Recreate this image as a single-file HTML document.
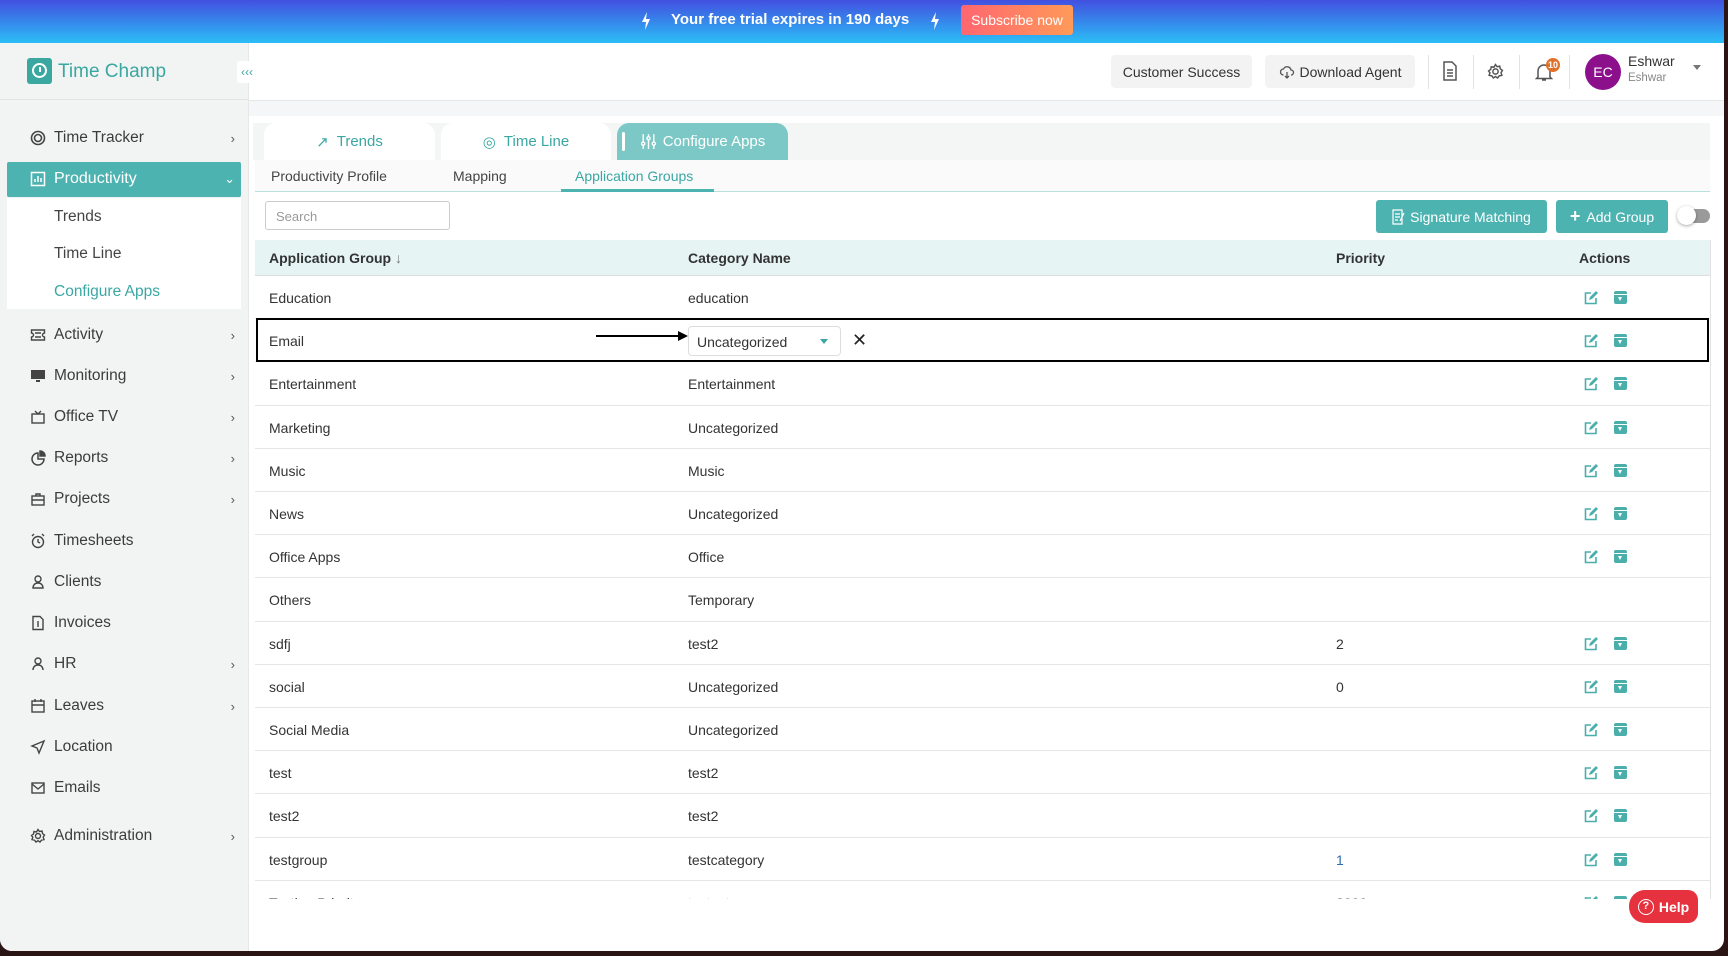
<!DOCTYPE html>
<html><head><meta charset="utf-8"><style>
*{box-sizing:border-box;margin:0;padding:0}
body{width:1728px;height:956px;overflow:hidden;background:#2a1414;font-family:"Liberation Sans",sans-serif;color:#333;position:relative}
.a{position:absolute}
#page{position:absolute;left:0;top:0;width:1724px;height:951px;background:#fff;border-radius:0 0 12px 12px;overflow:hidden}
#banner{left:0;top:0;width:1724px;height:43px;background:linear-gradient(#4250e0,#2bbef6)}
#side{left:0;top:43px;width:249px;height:908px;background:#f2f4f4;border-right:1px solid #e6e8e8}
.nav{position:absolute;left:30px;font-size:15.5px;color:#3c3c3c;display:flex;align-items:center;width:205px}
.nav svg{width:16px;height:16px;margin-right:8px;flex:none}
.nav .ch{position:absolute;right:0;font-size:13px;color:#555}
.sub{position:absolute;left:54px;font-size:15.5px;color:#444}
.hdrbtn{background:#f3f3f3;border-radius:4px;height:33px;top:55px;font-size:14px;color:#333;display:flex;align-items:center;justify-content:center}
.sep{top:55px;width:1px;height:34px;background:#e3e3e3}
.tab{top:123px;height:37px;border-radius:12px 12px 0 0;background:#fff;display:flex;align-items:center;justify-content:center;font-size:15px;color:#3aa7a3}
.st{top:160px;height:32px;line-height:32px;font-size:14px;color:#444}
.row{position:absolute;left:0;width:1455px;height:43.2px;border-bottom:1px solid #e6e6e6;font-size:14px}
.row span{position:absolute;top:14px}
.c1{left:14px}.c2{left:433px}.c3{left:1081px}
.ed{position:absolute;left:1329px;top:15px;width:14px;height:14px}
.ar{position:absolute;left:1359px;top:15px;width:13px;height:13px;background:#4aafab;border-radius:2px}
.ar:before{content:"";position:absolute;left:0;top:3px;width:13px;height:1px;background:#fff}
.ar:after{content:"";position:absolute;left:4px;top:6px;border-left:2.5px solid transparent;border-right:2.5px solid transparent;border-top:4px solid #fff}
</style></head><body>
<div id="page">
<div id="banner" class="a">
 <svg class="a" style="left:641px;top:12px" width="10" height="18" viewBox="0 0 10 18"><path d="M6 0L1 10h4l-1 8 5-11H5z" fill="#fff"/></svg>
 <div class="a" style="left:671px;top:11px;color:#fff;font-weight:bold;font-size:15px">Your free trial expires in 190 days</div>
 <svg class="a" style="left:930px;top:12px" width="10" height="18" viewBox="0 0 10 18"><path d="M6 0L1 10h4l-1 8 5-11H5z" fill="#fff"/></svg>
 <div class="a" style="left:961px;top:5px;width:112px;height:30px;border-radius:3px;background:linear-gradient(90deg,#ff6670,#ff9a58);color:#fff;font-size:14px;line-height:30px;text-align:center">Subscribe now</div>
</div>
<div id="side" class="a">
 <div class="a" style="left:27px;top:15px;width:25px;height:26px;background:#3aa7a0;border-radius:3px"><div class="a" style="left:5px;top:5px;width:15px;height:15px;border:2px solid #fff;border-radius:50%"></div><div class="a" style="left:12px;top:9px;width:2px;height:5px;background:#fff"></div></div>
 <div class="a" style="left:58px;top:18px;font-size:19px;color:#3aa7a0">Time Champ</div>
 <div class="a" style="left:237px;top:18px;width:20px;height:22px;background:#fff;border-radius:3px;color:#3aa7a0;font-size:12px;text-align:center;line-height:22px">‹‹‹</div>
 <div class="a" style="left:0;top:56px;width:249px;height:1px;background:#e3e3e3"></div>
 <div class="nav" style="top:86px"><svg viewBox="0 0 16 16" fill="none" stroke="#444" stroke-width="1.6"><circle cx="8" cy="8" r="6.5"/><circle cx="8" cy="8" r="3.5"/></svg>Time Tracker<span class="ch">›</span></div>
 <div class="a" style="left:7px;top:119px;width:234px;height:35px;background:#4db3b0;border-radius:2px"></div>
 <div class="nav" style="top:127px;color:#fff;font-size:16px"><svg viewBox="0 0 16 16" fill="none" stroke="#fff" stroke-width="1.5"><rect x="1.5" y="1.5" width="13" height="13"/><path d="M5 11V8M8 11V5M11 11V7"/></svg>Productivity<span class="ch" style="color:#fff">⌄</span></div>
 <div class="a" style="left:7px;top:155px;width:234px;height:111px;background:#fff"></div>
 <div class="sub" style="top:165px">Trends</div>
 <div class="sub" style="top:202px">Time Line</div>
 <div class="sub" style="top:240px;color:#3aa7a3">Configure Apps</div>
 <div class="nav" style="top:283px"><svg viewBox="0 0 16 16" fill="none" stroke="#444" stroke-width="1.4"><path d="M1.5 3h13v3a2 2 0 0 0 0 4v3h-13v-3a2 2 0 0 0 0-4z M5 6h6M5 10h6"/></svg>Activity<span class="ch">›</span></div>
 <div class="nav" style="top:324px"><svg viewBox="0 0 16 16" fill="#444"><rect x="1" y="2" width="14" height="9"/><rect x="6" y="12" width="4" height="2"/></svg>Monitoring<span class="ch">›</span></div>
 <div class="nav" style="top:365px"><svg viewBox="0 0 16 16" fill="none" stroke="#444" stroke-width="1.4"><rect x="2" y="5" width="12" height="9"/><path d="M5 2l3 3 3-3"/></svg>Office TV<span class="ch">›</span></div>
 <div class="nav" style="top:406px"><svg viewBox="0 0 16 16" fill="none" stroke="#444" stroke-width="1.5"><path d="M8 3a6 6 0 1 0 6 6H8z"/><path d="M10 1v5h5a5 5 0 0 0-5-5z" fill="#444"/></svg>Reports<span class="ch">›</span></div>
 <div class="nav" style="top:447px"><svg viewBox="0 0 16 16" fill="none" stroke="#444" stroke-width="1.4"><rect x="2" y="5" width="12" height="9"/><path d="M6 5V3h4v2M2 9h12"/></svg>Projects<span class="ch">›</span></div>
 <div class="nav" style="top:489px"><svg viewBox="0 0 16 16" fill="none" stroke="#444" stroke-width="1.4"><circle cx="8" cy="9" r="5.5"/><path d="M8 6v3l2 1M2 3l2-2M14 3l-2-2"/></svg>Timesheets</div>
 <div class="nav" style="top:530px"><svg viewBox="0 0 16 16" fill="none" stroke="#444" stroke-width="1.4"><circle cx="8" cy="5" r="3"/><path d="M3 14c0-3 2-5 5-5s5 2 5 5z"/></svg>Clients</div>
 <div class="nav" style="top:571px"><svg viewBox="0 0 16 16" fill="none" stroke="#444" stroke-width="1.4"><path d="M3 1.5h7l3 3v10H3z"/><path d="M8 6v6"/></svg>Invoices</div>
 <div class="nav" style="top:612px"><svg viewBox="0 0 16 16" fill="none" stroke="#444" stroke-width="1.4"><circle cx="8" cy="5" r="3"/><path d="M3 14c0-3 2-5 5-5s5 2 5 5"/></svg>HR<span class="ch">›</span></div>
 <div class="nav" style="top:654px"><svg viewBox="0 0 16 16" fill="none" stroke="#444" stroke-width="1.4"><rect x="2" y="3" width="12" height="11"/><path d="M2 7h12M5 1v3M11 1v3"/></svg>Leaves<span class="ch">›</span></div>
 <div class="nav" style="top:695px"><svg viewBox="0 0 16 16" fill="none" stroke="#444" stroke-width="1.4"><path d="M14 2L2 7l5 2 2 5z"/></svg>Location</div>
 <div class="nav" style="top:736px"><svg viewBox="0 0 16 16" fill="none" stroke="#444" stroke-width="1.4"><rect x="2" y="3" width="12" height="10"/><path d="M2 4l6 5 6-5"/></svg>Emails</div>
 <div class="nav" style="top:784px"><svg viewBox="0 0 16 16" fill="none" stroke="#444" stroke-width="1.4"><circle cx="8" cy="8" r="2.5"/><path d="M8 1.5l1.5 2 2.5-.5.5 2.5 2 1.5-1.3 2.2.8 2.4-2.5.5-1.5 2-2-1.4-2 1.4-1.5-2-2.5-.5.8-2.4L1.5 7.5l2-1.5.5-2.5 2.5.5z"/></svg>Administration<span class="ch">›</span></div>
</div>
<!-- header -->
<div class="a" style="left:249px;top:100px;width:1475px;height:1px;background:#e6e6e6"></div>
<div class="a" style="left:249px;top:101px;width:1475px;height:15px;background:#f5f6f7"></div>
<div class="a hdrbtn" style="left:1111px;width:141px">Customer Success</div>
<div class="a hdrbtn" style="left:1265px;width:150px"><svg width="16" height="16" viewBox="0 0 16 16" fill="none" stroke="#555" stroke-width="1.3" style="margin-right:5px"><path d="M4.5 11a3 3 0 0 1 0-6 4 4 0 0 1 7.5 1 2.5 2.5 0 0 1 0 5M8 8v6M6 12l2 2 2-2"/></svg>Download Agent</div>
<div class="a sep" style="left:1428px"></div><div class="a sep" style="left:1473px"></div><div class="a sep" style="left:1519px"></div><div class="a sep" style="left:1569px"></div>
<svg class="a" style="left:1442px;top:61px" width="16" height="20" viewBox="0 0 16 20" fill="none" stroke="#555" stroke-width="1.5"><path d="M2 1h8l4 4v14H2z M5 9h6M5 12h6M5 15h6"/></svg>
<svg class="a" style="left:1487px;top:63px" width="17" height="17" viewBox="0 0 16 16" fill="none" stroke="#555" stroke-width="1.4"><circle cx="8" cy="8" r="2.5"/><path d="M8 1.5l1.5 2 2.5-.5.5 2.5 2 1.5-1.3 2.2.8 2.4-2.5.5-1.5 2-2-1.4-2 1.4-1.5-2-2.5-.5.8-2.4L1.5 7.5l2-1.5.5-2.5 2.5.5z"/></svg>
<svg class="a" style="left:1535px;top:62px" width="18" height="20" viewBox="0 0 18 20" fill="none" stroke="#555" stroke-width="1.5"><path d="M3 15V9a6 6 0 0 1 12 0v6l1.5 1.5h-15zM7 18h4"/></svg>
<div class="a" style="left:1546px;top:58px;width:14px;height:14px;border-radius:50%;background:#e0702a;color:#fff;font-size:9px;line-height:14px;text-align:center;font-weight:bold">10</div>
<div class="a" style="left:1585px;top:54px;width:36px;height:36px;border-radius:50%;background:#8c0f8c;color:#fff;font-size:14px;line-height:36px;text-align:center">EC</div>
<div class="a" style="left:1628px;top:53px;font-size:14px;color:#333">Eshwar</div>
<div class="a" style="left:1628px;top:72px;font-size:11.5px;color:#888">Eshwar</div>
<div class="a" style="left:1693px;top:65px;border-left:4px solid transparent;border-right:4px solid transparent;border-top:5px solid #777"></div>
<!-- tabs -->
<div class="a" style="left:253px;top:123px;width:1457px;height:37px;background:#f4f6f6"></div>
<div class="a tab" style="left:264px;width:171px"><span style="margin-right:8px">↗</span>Trends</div>
<div class="a tab" style="left:441px;width:170px"><span style="margin-right:8px">◎</span>Time Line</div>
<div class="a tab" style="left:617px;width:171px;background:#7cc8c6;color:#fff"><div class="a" style="left:5px;top:9px;width:3px;height:19px;background:#fff;border-radius:2px"></div><svg width="17" height="17" viewBox="0 0 16 16" fill="none" stroke="#fff" stroke-width="1.3" style="margin-right:6px"><path d="M3 1v14M8 1v14M13 1v14"/><circle cx="3" cy="10" r="1.5" fill="#7cc8c6"/><circle cx="8" cy="5" r="1.5" fill="#7cc8c6"/><circle cx="13" cy="10" r="1.5" fill="#7cc8c6"/></svg>Configure Apps</div>
<div class="a" style="left:255px;top:160px;width:1455px;height:32px;background:#fafafa;border-bottom:1px solid #b8e0de"></div>
<div class="a st" style="left:271px">Productivity Profile</div>
<div class="a st" style="left:453px">Mapping</div>
<div class="a st" style="left:575px;color:#3aa7a3">Application Groups</div>
<div class="a" style="left:561px;top:189px;width:153px;height:3px;background:#4db3b0"></div>
<!-- toolbar -->
<div class="a" style="left:265px;top:201px;width:185px;height:29px;border:1px solid #ccc;border-radius:3px;font-size:13px;color:#999;padding:7px 10px">Search</div>
<div class="a" style="left:1376px;top:200px;width:171px;height:33px;background:#4db3b0;border-radius:3px;color:#fff;font-size:14px;display:flex;align-items:center;justify-content:center"><svg width="14" height="16" viewBox="0 0 14 16" fill="none" stroke="#fff" stroke-width="1.2" style="margin-right:4px"><path d="M1 1h9v14H1zM3 5h5M3 8h5M3 11h3M12 4l-4 8"/></svg>Signature Matching</div>
<div class="a" style="left:1556px;top:200px;width:112px;height:33px;background:#4db3b0;border-radius:3px;color:#fff;font-size:14px;display:flex;align-items:center;justify-content:center"><b style="font-size:18px;margin-right:6px">+</b>Add Group</div>
<div class="a" style="left:1679px;top:209px;width:31px;height:14px;background:#9a9a9a;border-radius:7px"></div>
<div class="a" style="left:1677px;top:206px;width:19px;height:19px;background:#fff;border-radius:50%;box-shadow:0 1px 3px rgba(0,0,0,.35)"></div>
<!-- table -->
<div class="a" style="left:255px;top:240px;width:1456px;height:659px;overflow:hidden;border-right:1px solid #e2e2e2">
 <div class="row" style="top:0;height:36px;background:#e6f4f4;font-weight:bold;border-bottom:1px solid #ddd"><span class="c1" style="top:10px">Application Group <span style="position:static;color:#777;font-weight:normal">↓</span></span><span class="c2" style="top:10px">Category Name</span><span class="c3" style="top:10px">Priority</span><span style="left:1324px;top:10px">Actions</span></div>
 <div id="rows"></div>
</div>
<!-- highlight box -->
<div class="a" style="left:256px;top:318px;width:1453px;height:44px;border:2.5px solid #000"></div>
<div class="a" style="left:688px;top:326px;width:153px;height:30px;border:1px solid #ddd;border-radius:4px;background:#fff;font-size:14px;padding:7px 8px">Uncategorized<span style="position:absolute;right:12px;top:12px;border-left:4px solid transparent;border-right:4px solid transparent;border-top:5px solid #3aa7a3"></span></div>
<div class="a" style="left:852px;top:330px;font-size:18px;color:#222">✕</div>
<div class="a" style="left:596px;top:335px;width:84px;height:2px;background:#000"></div>
<div class="a" style="left:678px;top:331px;border-top:5px solid transparent;border-bottom:5px solid transparent;border-left:10px solid #000"></div>
<!-- help -->
<div class="a" style="left:1629px;top:890px;width:69px;height:33px;border-radius:16px 10px 10px 16px;background:#e5323e;color:#fff;font-weight:bold;font-size:14px;display:flex;align-items:center;justify-content:center"><span style="display:inline-block;width:16px;height:16px;border:1.5px solid #fff;border-radius:50%;font-size:11px;line-height:13px;text-align:center;margin-right:5px">?</span>Help</div>
</div>
<script>
var d=[["Education","education","",1],["Email","","",1],["Entertainment","Entertainment","",1],["Marketing","Uncategorized","",1],["Music","Music","",1],["News","Uncategorized","",1],["Office Apps","Office","",1],["Others","Temporary","",0],["sdfj","test2","2",1],["social","Uncategorized","0",1],["Social Media","Uncategorized","",1],["test","test2","",1],["test2","test2","",1],["testgroup","testcategory","1",1],["Testing Priority","testcat","2000",1]];
var h="";d.forEach(function(r,i){var t=36+i*43.2;h+='<div class="row" style="top:'+t+'px"><span class="c1">'+r[0]+'</span><span class="c2"'+(i==14?' style="color:#2a6db0"':'')+'>'+r[1]+'</span><span class="c3"'+(i==13?' style="color:#2a6db0"':'')+'>'+r[2]+'</span>'+(r[3]?'<svg class="ed" viewBox="0 0 14 14" fill="none" stroke="#4aafab" stroke-width="1.6"><path d="M7 2H1.5v10.5H12V7"/><path d="M5 9l1-3 6-6 2 2-6 6z" fill="#4aafab" stroke="none"/></svg><div class="ar"></div>':'')+'</div>';});
document.getElementById("rows").innerHTML=h;
</script>
</body></html>
